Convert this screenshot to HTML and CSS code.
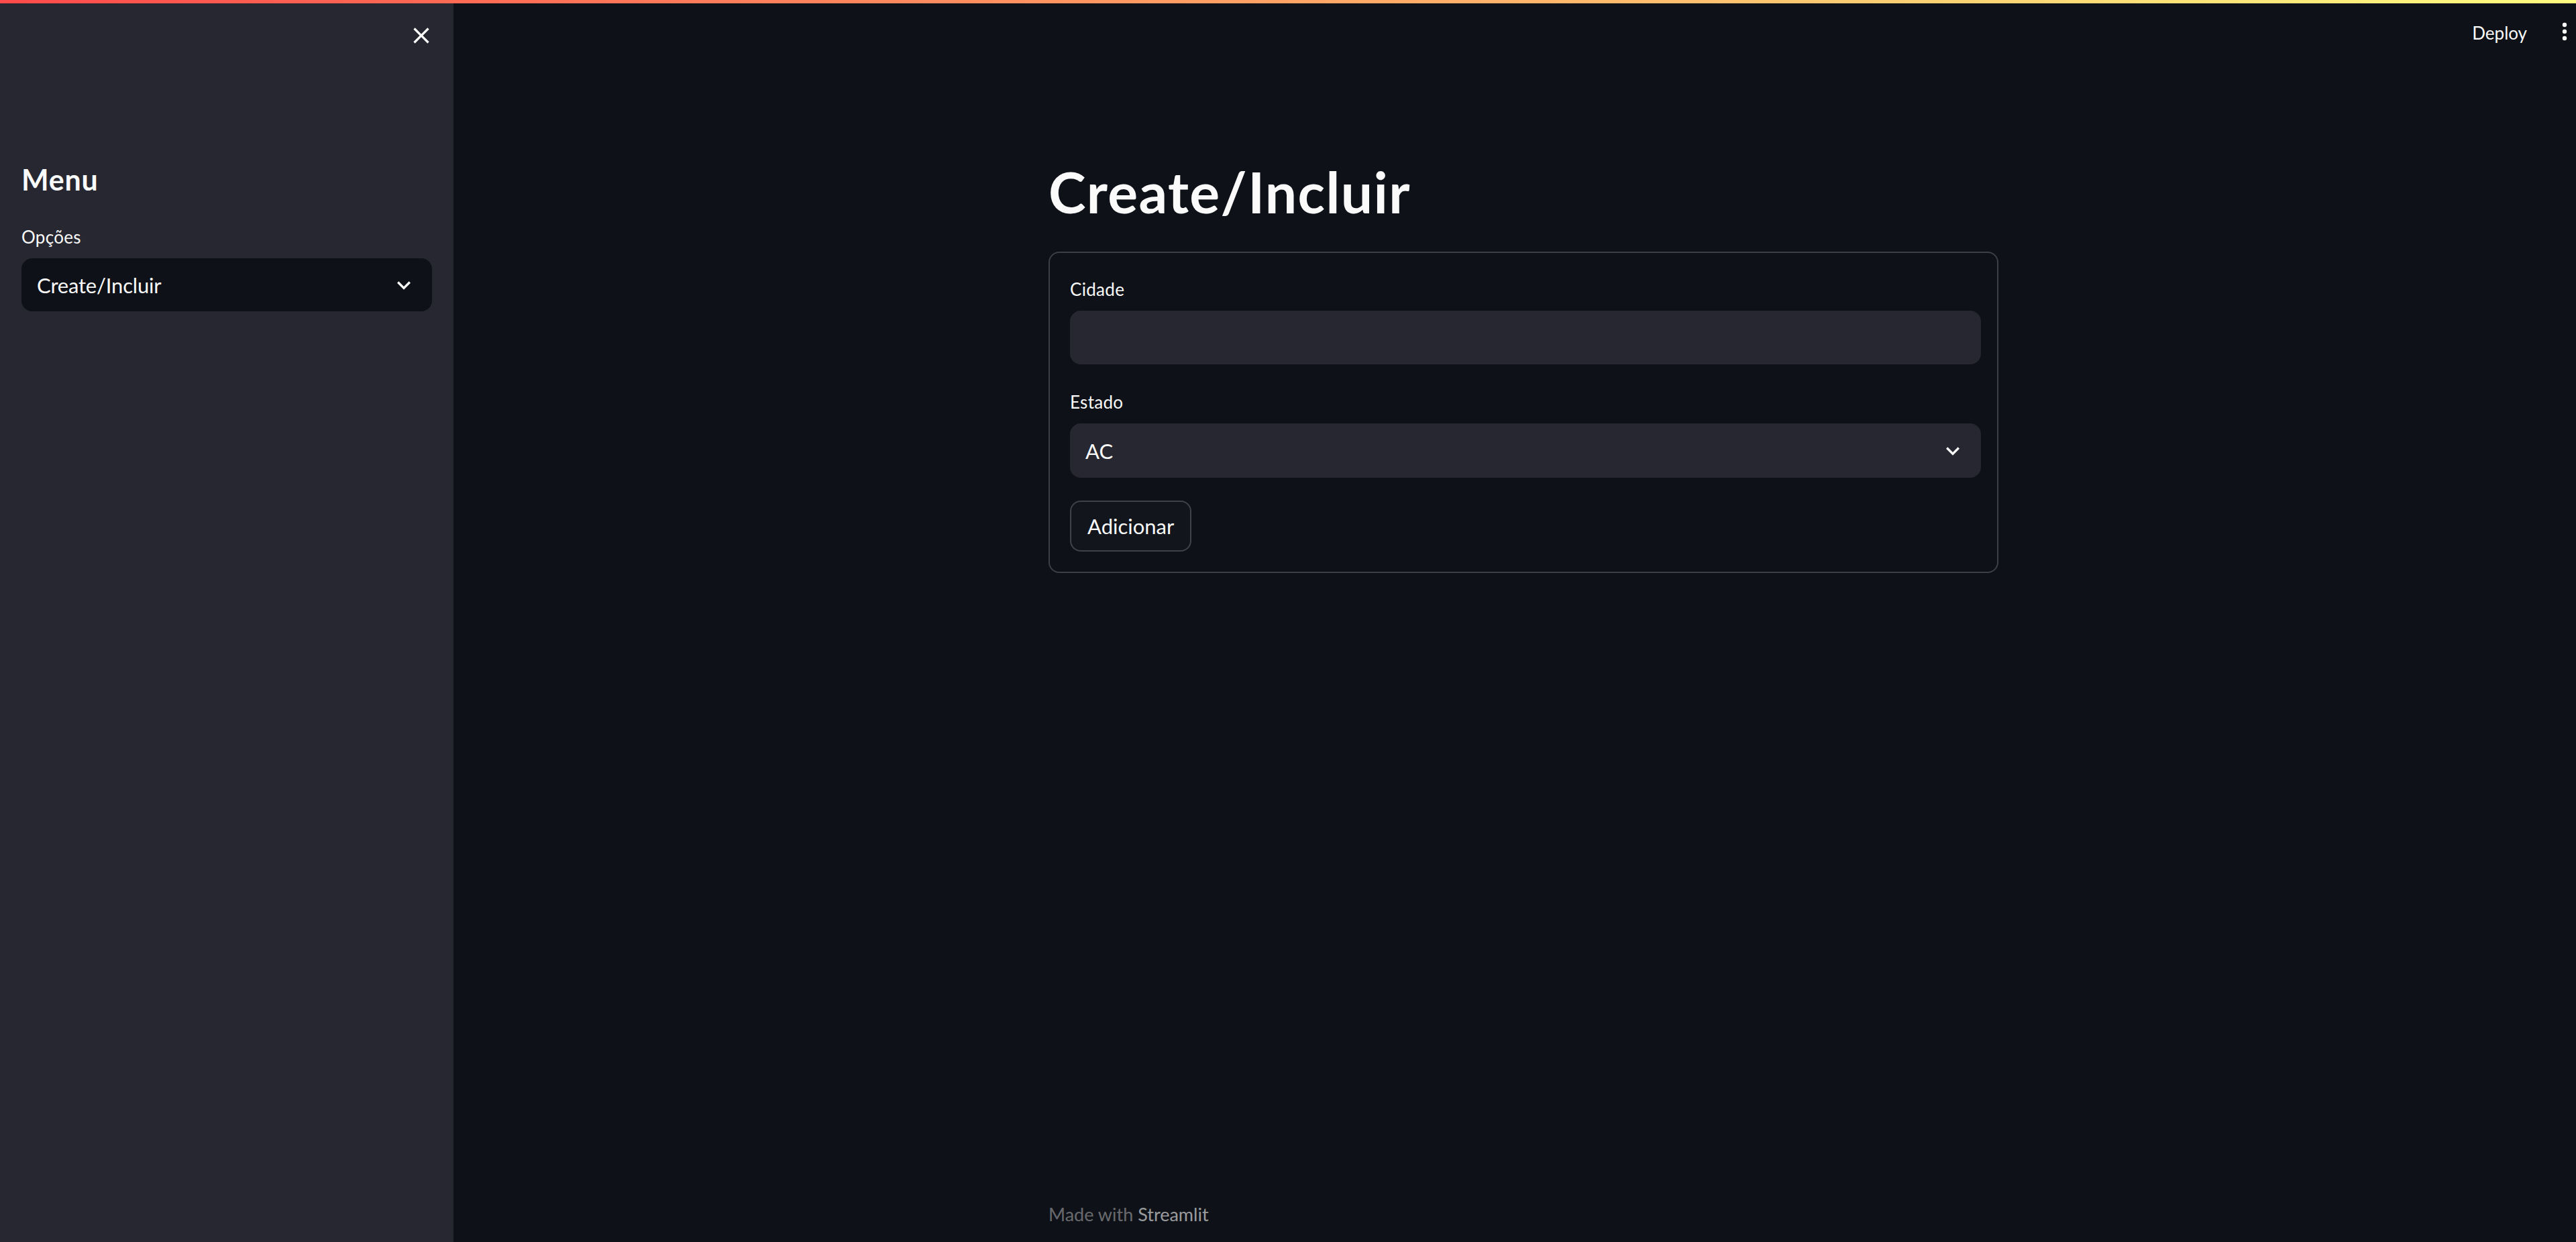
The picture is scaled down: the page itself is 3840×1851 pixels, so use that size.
FILE: index.html
```html
<!DOCTYPE html>
<html lang="pt">
<head>
<meta charset="utf-8">
<title>Create/Incluir</title>
<link rel="stylesheet" href="styles.css">
</head>
<body>
<div class="decoration"></div>
<aside class="sidebar">
  <div class="sidebar-header">
    <button class="icon-btn close-btn" aria-label="Close sidebar">
      <svg viewBox="0 0 24 24" width="40" height="40"><path fill="#fafafa" d="M19 6.41L17.59 5 12 10.590 6.41 5 5 6.41 10.59 12 5 17.59 6.41 19 12 13.41 17.59 19 19 17.59 13.41 12z"/></svg>
    </button>
  </div>
  <div class="sidebar-content">
    <h2 class="sidebar-title">Menu</h2>
    <div class="field-label">Opções</div>
    <div class="select select-dark">
      <span class="select-value">Create/Incluir</span>
      <svg class="chevron" viewBox="0 0 24 24" width="40" height="40"><path fill="#fafafa" d="M16.59 8.59L12 13.17 7.41 8.59 6 10l6 6 6-6z"/></svg>
    </div>
  </div>
</aside>
<main class="main">
  <header class="topbar">
    <span class="deploy">Deploy</span>
    <svg class="kebab" viewBox="0 0 12 36" width="12" height="36"><circle cx="6" cy="6" r="3.2" fill="#fafafa"/><circle cx="6" cy="16" r="3.2" fill="#fafafa"/><circle cx="6" cy="26" r="3.2" fill="#fafafa"/></svg>
  </header>
  <section class="block">
    <h1 class="page-title">Create/Incluir</h1>
    <form class="form-box">
      <div class="field-label">Cidade</div>
      <div class="text-input"></div>
      <div class="field-label field-gap">Estado</div>
      <div class="select select-light">
        <span class="select-value">AC</span>
        <svg class="chevron" viewBox="0 0 24 24" width="40" height="40"><path fill="#fafafa" d="M16.59 8.59L12 13.17 7.41 8.59 6 10l6 6 6-6z"/></svg>
      </div>
      <div class="btn-row"><button type="button" class="btn">Adicionar</button></div>
    </form>
  </section>
  <footer class="footer">Made with <span class="footer-brand">Streamlit</span></footer>
</main>
</body>
</html>
```
FILE: styles.css
```css
* { box-sizing: border-box; }
html, body { margin: 0; padding: 0; }
body {
  display: flex;
  height: 100vh;
  overflow: hidden;
  background: #0e1117;
  color: #fafafa;
  font-family: Lato, "Open Sans", sans-serif;
}
.decoration {
  position: fixed;
  top: 0; left: 0; right: 0;
  height: 5px;
  background: linear-gradient(90deg, #ff4b4b, #fffd80);
  z-index: 10;
}
.sidebar {
  width: 676px;
  flex: none;
  background: #262730;
  display: flex;
  flex-direction: column;
}
.sidebar-header {
  height: 106px;
  display: flex;
  align-items: center;
  justify-content: flex-end;
  padding-right: 24px;
}
.icon-btn {
  background: none;
  border: none;
  padding: 4px;
  width: 48px;
  height: 48px;
  display: flex;
  align-items: center;
  justify-content: center;
}
.sidebar-content {
  padding: 136px 32px 0 32px;
}
.sidebar-title {
  margin: 0;
  font-size: 43px;
  line-height: 52px;
  font-weight: 700;
  letter-spacing: 0.8px;
  height: 87px;
}
.field-label {
  font-size: 26px;
  line-height: 48px;
  height: 48px;
  margin-bottom: 8px;
  color: #fafafa;
  letter-spacing: 0.3px;
}
.select {
  height: 80px;
  border-radius: 16px;
  display: flex;
  align-items: center;
  justify-content: space-between;
  padding: 0 22px 0 23px;
}
.select-dark { background: #0e1117; height: 79px; }
.select-light { background: #262730; height: 81px; }
.select-value { font-size: 31px; }
.select-dark .select-value { letter-spacing: -0.2px; }
.main {
  flex: 1;
  display: flex;
  flex-direction: column;
  padding-left: 26px;
}
.topbar {
  height: 98px;
  display: flex;
  align-items: center;
  justify-content: flex-end;
  gap: 50px;
  padding-right: 11px;
}
.deploy { font-size: 26px; line-height: 40px; }
.block {
  width: 1416px;
  margin: 0 auto;
  padding-top: 137px;
}
.page-title {
  margin: 0 0 39px 0;
  font-size: 84px;
  line-height: 101px;
  font-weight: 700;
  letter-spacing: 1.4px;
}
.form-box {
  margin: 0;
  border: 2px solid rgba(250,250,250,0.2);
  border-radius: 16px;
  padding: 30px 24px 30px 30px;
}
.text-input {
  height: 80px;
  border-radius: 16px;
  background: #262730;
}
.field-gap { margin-top: 32px; }
.btn-row { margin-top: 34px; display: flex; }
.btn {
  height: 76px;
  padding: 0 24px;
  border: 2px solid rgba(250,250,250,0.2);
  border-radius: 16px;
  background: #12151c;
  color: #fafafa;
  font-family: inherit;
  font-size: 31px;
}
.footer {
  margin-top: auto;
  width: 1416px;
  margin-left: auto;
  margin-right: auto;
  font-size: 27px;
  line-height: 40px;
  padding-bottom: 21px;
  color: rgba(250,250,250,0.4);
}
.footer-brand { color: rgba(250,250,250,0.6); }
```
